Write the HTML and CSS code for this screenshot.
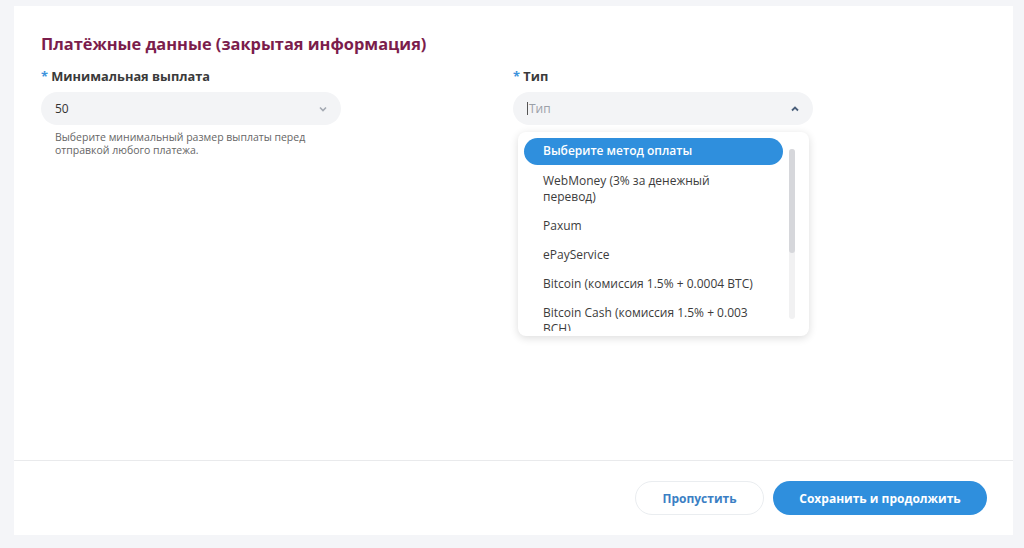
FILE: index.html
```html
<!DOCTYPE html>
<html lang="ru">
<head>
  <meta charset="UTF-8">
  <meta name="viewport" content="width=device-width, initial-scale=1.0">
  <title>Платёжные данные</title>
  <link rel="stylesheet" href="styles.css">
</head>
<body>
<div class="card">
  <div class="content">
    <h2 class="title">Платёжные данные (закрытая информация)</h2>
    <div class="fields">
      <div class="field">
        <label class="label"><span class="req">*</span> Минимальная выплата</label>
        <div class="select">
          <span class="value">50</span>
          <svg class="chev" width="8" height="6" viewBox="0 0 8 6"><path d="M1 1.5 L4 4.5 L7 1.5" fill="none" stroke="#a4a9b2" stroke-width="1.6"/></svg>
        </div>
        <p class="help">Выберите минимальный размер выплаты перед<br>отправкой любого платежа.</p>
      </div>
      <div class="field">
        <label class="label"><span class="req">*</span> Тип</label>
        <div class="select open">
          <span class="caret"></span><span class="placeholder">Тип</span>
          <svg class="chev" width="8" height="6" viewBox="0 0 8 6"><path d="M1 4.5 L4 1.5 L7 4.5" fill="none" stroke="#4a5f7a" stroke-width="1.8"/></svg>
        </div>
        <p class="help">Выберите метод оплаты для получения выплат.</p>
        <div class="dropdown">
          <ul class="options">
            <li class="active">Выберите метод оплаты</li>
            <li>WebMoney (3% за денежный<br>перевод)</li>
            <li>Paxum</li>
            <li>ePayService</li>
            <li>Bitcoin (комиссия 1.5% + 0.0004 BTC)</li>
            <li>Bitcoin Cash (комиссия 1.5% + 0.003<br>BCH)</li>
          </ul>
          <div class="scrollbar"><div class="thumb"></div></div>
        </div>
      </div>
    </div>
  </div>
  <div class="footer">
    <button class="btn ghost">Пропустить</button>
    <button class="btn primary">Сохранить и продолжить</button>
  </div>
</div>
</body>
</html>
```

FILE: styles.css
```css
body {
  margin: 0;
  font-family: "Open Sans", "Noto Sans", sans-serif;
  background: #f4f5f8;
  color: #333;
}
.card {
  background: #fff;
  margin: 6px 11px 0 14px;
  height: 529px;
  display: flex;
  flex-direction: column;
}
.content {
  flex: 1;
  padding: 26px 27px 0;
}
.title {
  margin: 0;
  font-size: 16.4px;
  font-weight: 700;
  color: #7b1d4c;
  line-height: 24px;
}
.fields {
  display: flex;
  margin-top: 12px;
}
.field {
  width: 472px;
  position: relative;
}
.label {
  display: block;
  font-size: 12.8px;
  font-weight: 700;
  color: #3a3a3a;
  line-height: 16px;
}
.req {
  color: #3d93dc;
}
.select {
  margin-top: 8px;
  width: 300px;
  height: 33px;
  border-radius: 17px;
  background: #f3f4f6;
  display: flex;
  align-items: center;
  padding: 0 14px;
  box-sizing: border-box;
  font-size: 12px;
  color: #333;
}
.select .value {
  flex: 1;
}
.select .placeholder {
  flex: 1;
  color: #9ba0a8;
}
.caret {
  width: 1px;
  height: 13px;
  background: #555;
  margin-right: 1px;
}
.help {
  margin: 6px 0 0 14px;
  font-size: 10.5px;
  line-height: 13px;
  color: #666;
}
.dropdown {
  position: absolute;
  top: 64px;
  left: 5px;
  width: 291px;
  height: 204px;
  background: #fff;
  border-radius: 8px;
  box-shadow: 0 2px 8px rgba(0, 0, 0, 0.14);
  overflow: hidden;
}
.options {
  list-style: none;
  margin: 0;
  padding: 6px 0 0 6px;
  height: 199px;
  box-sizing: border-box;
  overflow: hidden;
}
.options li {
  width: 259px;
  box-sizing: border-box;
  padding: 5px 19px;
  font-size: 12px;
  line-height: 16px;
  color: #3c3c3c;
  margin-bottom: 3px;
}
.options li.active {
  background: #2f8fdd;
  color: #fff;
  font-weight: 600;
  border-radius: 14px;
  height: 27px;
  padding-top: 5px;
  margin-bottom: 3px;
}
.scrollbar {
  position: absolute;
  top: 17px;
  left: 271px;
  width: 6px;
  height: 170px;
  background: #f1f1f2;
  border-radius: 3px;
}
.thumb {
  height: 104px;
  background: #d6d7db;
  border-radius: 3px;
}
.footer {
  border-top: 1px solid #e9eaec;
  height: 74px;
  display: flex;
  justify-content: flex-end;
  align-items: center;
  gap: 9px;
  padding: 0 26px 0 0;
}
.btn {
  height: 34px;
  border-radius: 17px;
  font-family: inherit;
  font-size: 12px;
  font-weight: 700;
  cursor: pointer;
}
.ghost {
  width: 129px;
  background: #fff;
  border: 1px solid #eaedf0;
  color: #3b7fc4;
}
.primary {
  width: 214px;
  background: #2f8fdd;
  border: none;
  color: #fff;
}
```
